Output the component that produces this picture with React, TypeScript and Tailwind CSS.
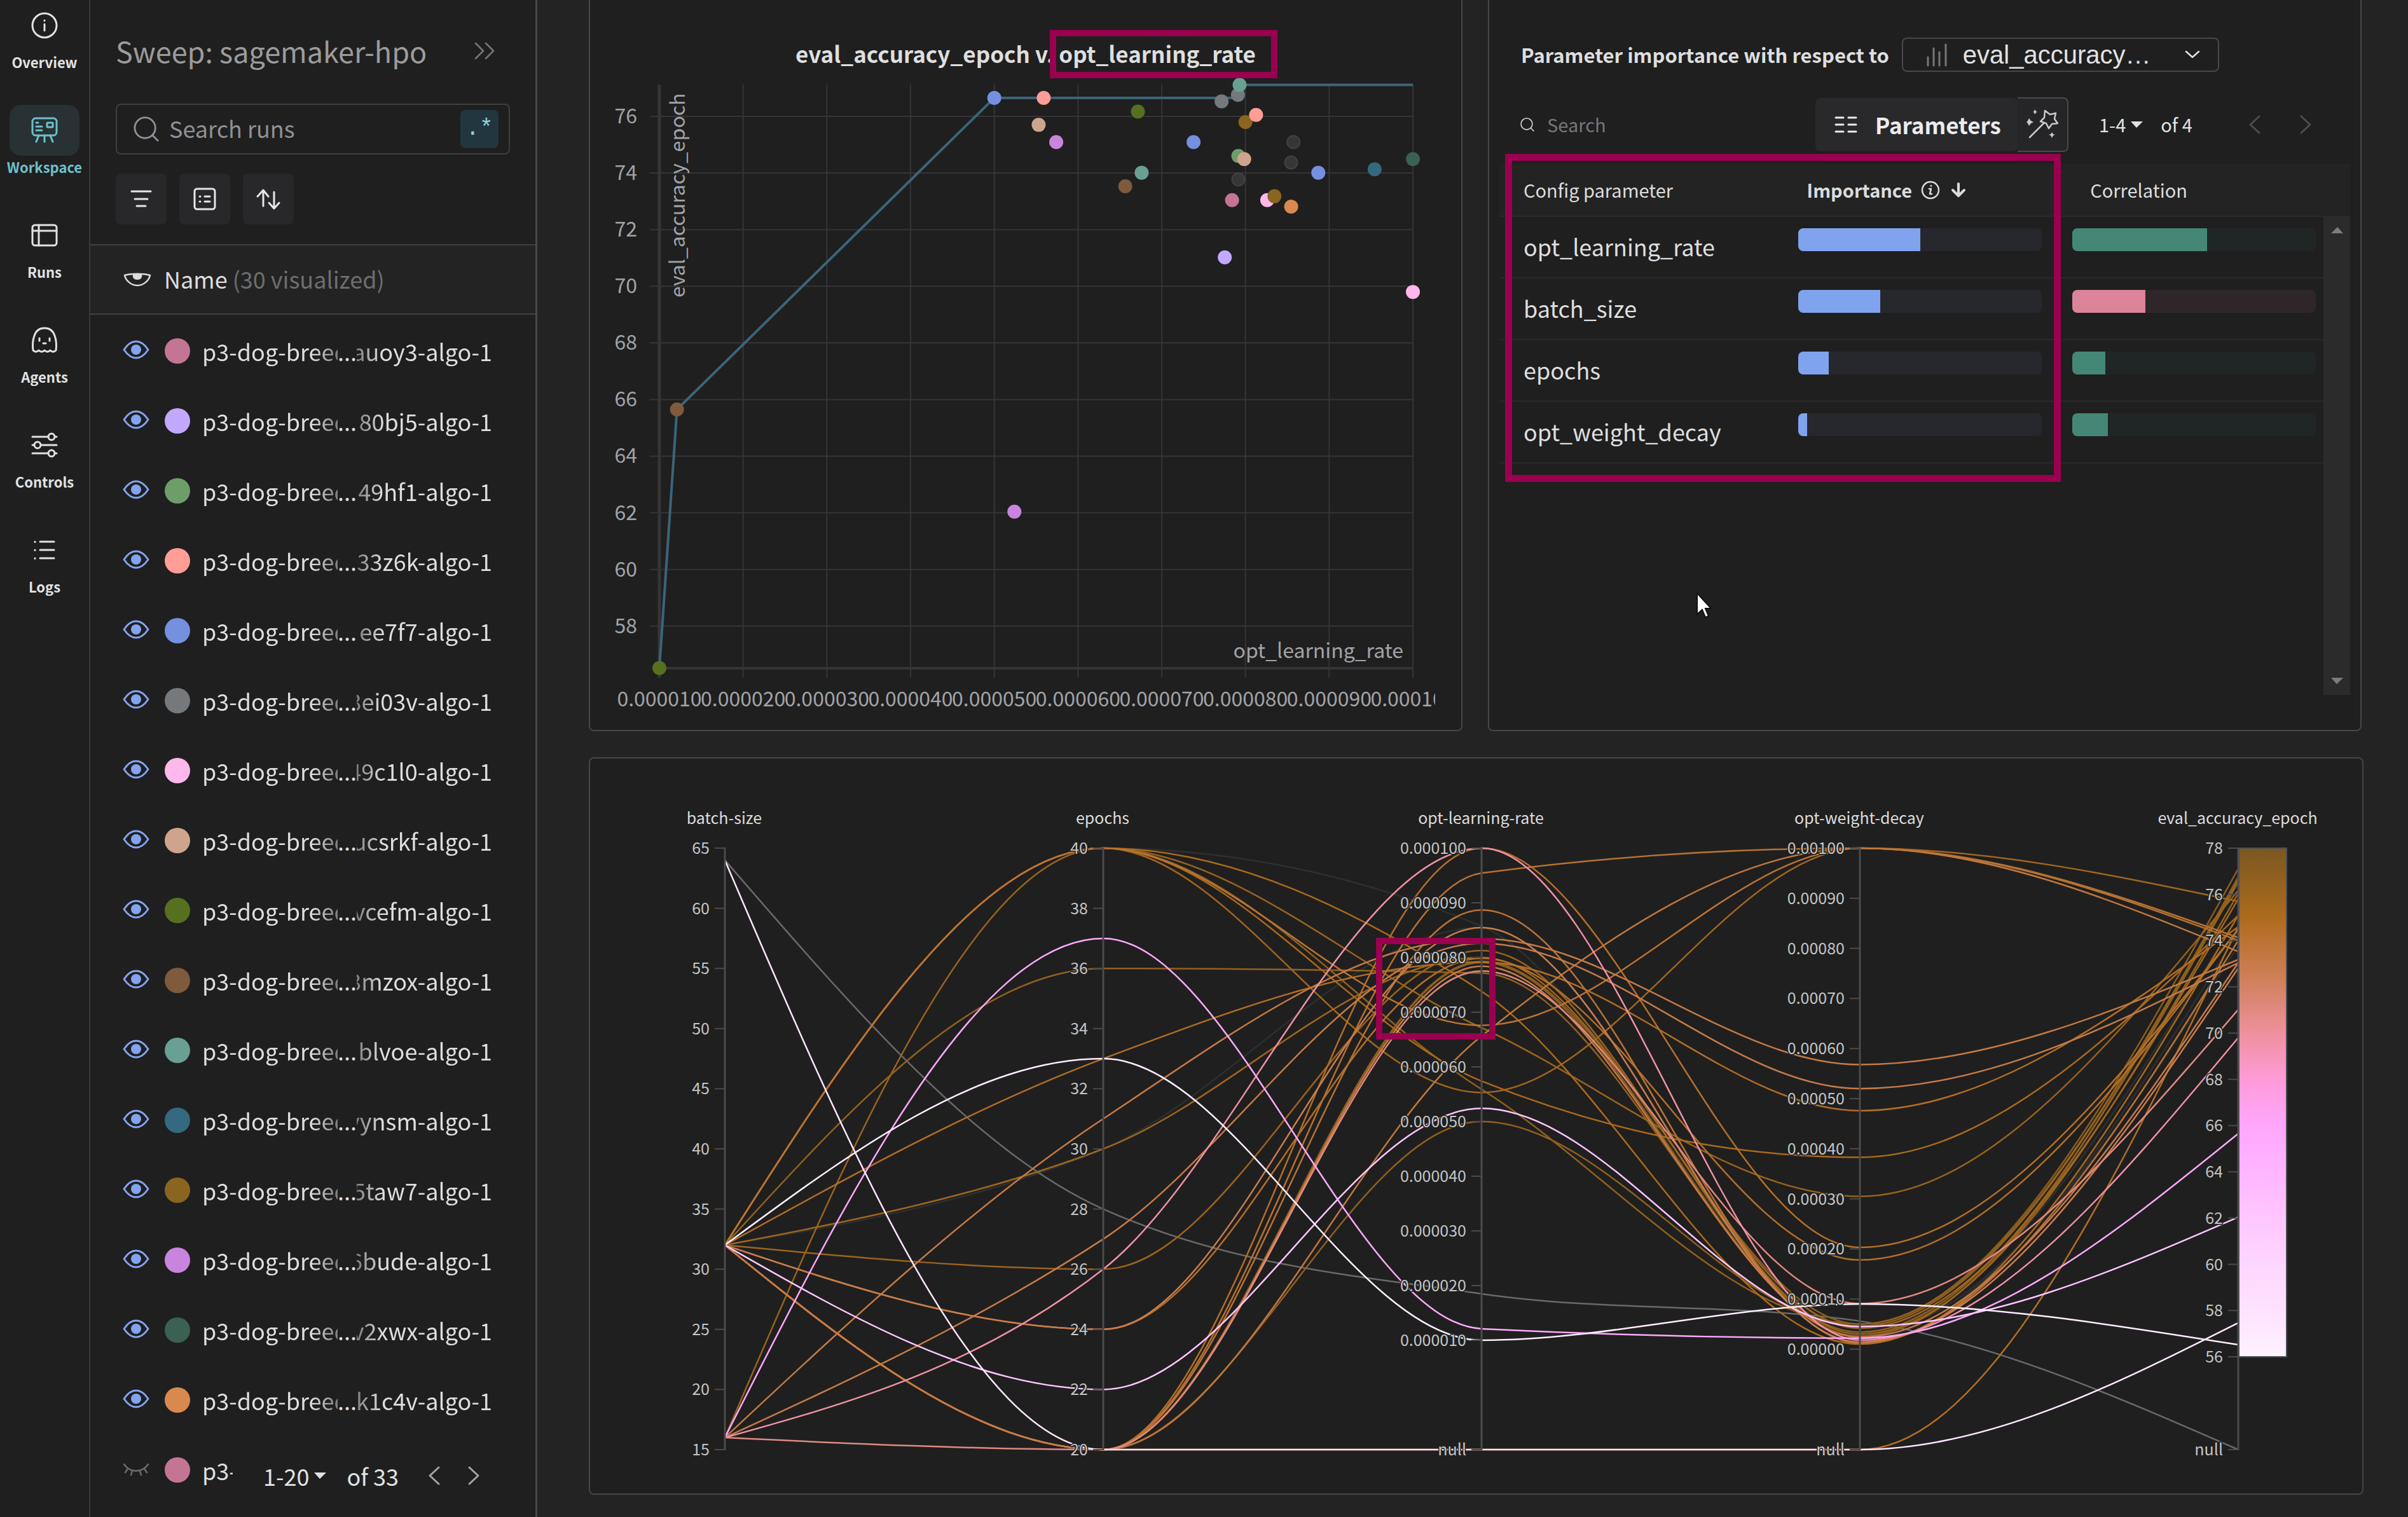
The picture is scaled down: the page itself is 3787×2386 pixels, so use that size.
import React from "react";

/* ---------- shared data ---------- */

type Run = {
  color: string;
  batch: number;
  epochs: number;
  lr: number | null; // in units of 1e-5
  wd: number | null; // in units of 1e-5
  acc: number | null;
  dim?: boolean;
};

const RUNS: Run[] = [
  { color: "#56701f", batch: 32, epochs: 33, lr: 1.0, wd: 9, acc: 56.52 },
  { color: "#7f5a3c", batch: 16, epochs: 37, lr: 1.21, wd: 2.2, acc: 65.65 },
  { color: "#7590de", batch: 32, epochs: 20, lr: 5.0, wd: 4.6, acc: 76.65 },
  { color: "#ff9d96", batch: 32, epochs: 40, lr: 5.59, wd: 5, acc: 76.65 },
  { color: "#cfa48d", batch: 32, epochs: 40, lr: 5.53, wd: 100, acc: 75.7 },
  { color: "#c985de", batch: 32, epochs: 40, lr: 5.74, wd: 38.3, acc: 75.09 },
  { color: "#56701f", batch: 16, epochs: 40, lr: 6.715, wd: 30.5, acc: 76.17 },
  { color: "#69a093", batch: 32, epochs: 40, lr: 6.76, wd: 100, acc: 74.01 },
  { color: "#7f5a3c", batch: 32, epochs: 20, lr: 6.565, wd: 100, acc: 73.53 },
  { color: "#7590de", batch: 32, epochs: 40, lr: 7.38, wd: 1, acc: 75.09 },
  { color: "#75797c", batch: 32, epochs: 36, lr: 7.715, wd: 3.4, acc: 76.53 },
  { color: "#75797c", batch: 32, epochs: 20, lr: 7.91, wd: 2.6, acc: 76.76 },
  { color: "#69a093", batch: 32, epochs: 20, lr: 7.93, wd: 5, acc: 77.11 },
  { color: "#8a651f", batch: 32, epochs: 30, lr: 8.0, wd: 4.2, acc: 75.8 },
  { color: "#ff9d96", batch: 32, epochs: 26, lr: 8.127, wd: 3, acc: 76.05 },
  { color: "#6f9d6a", batch: 32, epochs: 33, lr: 7.915, wd: 47.6, acc: 74.6 },
  { color: "#cfa48d", batch: 32, epochs: 24, lr: 7.985, wd: 17.8, acc: 74.49 },
  { color: "#363637", batch: 32, epochs: 20, lr: 7.915, wd: 3, acc: 73.77, dim: true },
  { color: "#c47594", batch: 32, epochs: 20, lr: 7.84, wd: 2.4, acc: 73.04 },
  { color: "#ffb8eb", batch: 16, epochs: 27, lr: 8.26, wd: 52, acc: 73.04 },
  { color: "#8a651f", batch: 16, epochs: 31, lr: 8.346, wd: 56.8, acc: 73.18 },
  { color: "#d9894f", batch: 32, epochs: 24, lr: 8.546, wd: 1.4, acc: 72.81 },
  { color: "#c3a8ff", batch: 16, epochs: 20, lr: 7.753, wd: 9.1, acc: 71.02 },
  { color: "#363637", batch: 32, epochs: 40, lr: 8.573, wd: 4, acc: 75.09, dim: true },
  { color: "#363637", batch: 32, epochs: 30, lr: 8.546, wd: 2, acc: 74.37, dim: true },
  { color: "#7590de", batch: 32, epochs: 20, lr: 8.87, wd: 1.2, acc: 74.01 },
  { color: "#35697f", batch: 32, epochs: 20, lr: 9.543, wd: 100, acc: 74.13 },
  { color: "#3a6152", batch: 32, epochs: 20, lr: 10, wd: 20.3, acc: 74.49 },
  { color: "#ffb8eb", batch: 16, epochs: 26, lr: 10, wd: 1.8, acc: 69.8 },
  { color: "#c985de", batch: 32, epochs: 22, lr: 5.24, wd: 4.5, acc: 62.04 },
  { color: "", batch: 32, epochs: 20, lr: null, wd: null, acc: 74.6 },
  { color: "", batch: 64, epochs: 20, lr: null, wd: null, acc: 57.47 },
  { color: "", batch: 64, epochs: 28, lr: 1.85, wd: 5.6, acc: null },
];

const RUN_LIST: [string, string][] = [
  ["#c47594", "auoy3-algo-1"],
  ["#c3a8ff", "80bj5-algo-1"],
  ["#6f9d6a", "49hf1-algo-1"],
  ["#ff9d96", "33z6k-algo-1"],
  ["#7590de", "ee7f7-algo-1"],
  ["#75797c", "3ei03v-algo-1"],
  ["#ffb8eb", "49c1l0-algo-1"],
  ["#cfa48d", "ucsrkf-algo-1"],
  ["#56701f", "vcefm-algo-1"],
  ["#7f5a3c", "3mzox-algo-1"],
  ["#69a093", "blvoe-algo-1"],
  ["#35697f", "vynsm-algo-1"],
  ["#8a651f", "5taw7-algo-1"],
  ["#c985de", "6bude-algo-1"],
  ["#3a6152", "v2xwx-algo-1"],
  ["#d9894f", "k1c4v-algo-1"],
];

/* ---------- icons ---------- */

const stroke = { fill: "none", stroke: "currentColor", strokeLinecap: "round", strokeLinejoin: "round" } as const;

function InfoIcon() {
  return (
    <svg width="44" height="44" viewBox="0 0 44 44" {...stroke} strokeWidth="3">
      <circle cx="22" cy="22" r="19" />
      <path d="M22 20v10" />
      <path d="M22 14v.5" />
    </svg>
  );
}
function BoardIcon() {
  return (
    <svg width="44" height="44" viewBox="0 0 44 44" {...stroke} strokeWidth="3">
      <rect x="3" y="3" width="38" height="27" rx="5" />
      <path d="M9 10h3M9 16h9M9 22h9M22 30v10M13 30l-4 10M31 30l4 10" />
      <rect x="26" y="10" width="9" height="7" rx="1" />
    </svg>
  );
}
function TableIcon() {
  return (
    <svg width="44" height="44" viewBox="0 0 44 44" {...stroke} strokeWidth="3">
      <rect x="3" y="6" width="38" height="32" rx="4" />
      <path d="M3 15h38M13 6v32" />
    </svg>
  );
}
function GhostIcon() {
  return (
    <svg width="44" height="44" viewBox="0 0 44 44" {...stroke} strokeWidth="3">
      <path d="M4 38c-1-8-1-15 2-23C9 6 15 3 22 3s13 3 16 12c3 8 3 15 2 23-3 3-6 3-9 0-3 3-6 3-9 0-3 3-6 3-9 0-3 3-6 3-9 0z" />
      <path d="M14 19v4M30 19v4M20 27h4" />
    </svg>
  );
}
function SlidersIcon() {
  return (
    <svg width="44" height="44" viewBox="0 0 44 44" {...stroke} strokeWidth="3">
      <path d="M3 9h25M38 9h3M3 22h3M16 22h25M3 35h25M38 35h3" />
      <circle cx="33" cy="9" r="5" />
      <circle cx="11" cy="22" r="5" />
      <circle cx="33" cy="35" r="5" />
    </svg>
  );
}
function LogsIcon() {
  return (
    <svg width="44" height="44" viewBox="0 0 44 44" {...stroke} strokeWidth="3">
      <path d="M15 9h22M15 22h22M15 35h22M7 9v.5M7 22v.5M7 35v.5" />
    </svg>
  );
}
function EyeIcon() {
  return (
    <svg width="42" height="30" viewBox="0 0 42 30" {...stroke} strokeWidth="3">
      <path d="M2 15C8 6 14 2 21 2s13 4 19 13c-6 9-12 13-19 13S8 24 2 15z" />
      <circle cx="21" cy="15" r="8" fill="currentColor" stroke="none" />
    </svg>
  );
}
function HalfEyeIcon() {
  return (
    <svg width="44" height="22" viewBox="0 0 44 22" {...stroke} strokeWidth="2.5">
      <path d="M2 4c10-3 30-3 40 0-2 9-11 16-20 16S4 13 2 4z" />
      <path d="M15 3h14c1 5-2 8-7 8s-8-3-7-8z" fill="currentColor" stroke="none" />
    </svg>
  );
}
function ClosedEyeIcon() {
  return (
    <svg width="42" height="26" viewBox="0 0 42 26" {...stroke} strokeWidth="2.5">
      <path d="M2 4c10 14 28 14 38 0M8 11l-4 6M15 14l-2 7M27 14l2 7M34 11l4 6" />
    </svg>
  );
}
function SearchIcon({ size }: { size: number }) {
  return (
    <svg width={size} height={size} viewBox="0 0 42 42" {...stroke} strokeWidth="3" className="shrink-0">
      <circle cx="19" cy="19" r="17" />
      <path d="M31 31l9 9" />
    </svg>
  );
}
function Chevron({ dir, className }: { dir: "left" | "right"; className?: string }) {
  return (
    <svg width="20" height="32" viewBox="0 0 20 32" {...stroke} strokeWidth="3" className={className}>
      <path d={dir === "left" ? "M17 3L3 16l14 13" : "M3 3l14 13L3 29"} />
    </svg>
  );
}
function Caret() {
  return (
    <svg width="19" height="10" viewBox="0 0 19 10">
      <path d="M0 0h19L9 10z" fill="currentColor" />
    </svg>
  );
}
function WandIcon() {
  return (
    <svg width="50" height="50" viewBox="0 0 50 50" {...stroke} strokeWidth="2.5">
      <path d="M5 45L28 22" />
      <path d="M29 3l8 6 9-2-2 9 5 7-9 1-5 7-4-8-9-3 6-6z" />
      <path d="M4 15l3 4 4 2-4 2-3 4-2-4-2-2 2-2zM13 1l2 3 2 1-2 1-2 3-1-3-2-1 2-1zM40 37l2 3 3 1-3 1-2 4-2-4-3-1 3-1z" fill="currentColor" stroke="none" />
    </svg>
  );
}

/* ---------- left navigation ---------- */

const NAV = [
  { label: "Overview", icon: InfoIcon },
  { label: "Workspace", icon: BoardIcon, active: true },
  { label: "Runs", icon: TableIcon },
  { label: "Agents", icon: GhostIcon },
  { label: "Controls", icon: SlidersIcon },
  { label: "Logs", icon: LogsIcon },
];

function NavRail() {
  return (
    <nav className="flex w-[142px] shrink-0 flex-col gap-[51px] border-r-2 border-[#38383a]">
      {NAV.map(({ label, icon: Icon, active }) => (
        <a
          key={label}
          href={"#" + label.toLowerCase()}
          className={"flex flex-col items-center " + (active ? "text-[#6fc0ca]" : "text-[#e2e2e3]")}
        >
          <span
            className={
              "flex h-20 w-[110px] items-center justify-center rounded-[18px] " + (active ? "bg-[#283133]" : "")
            }
          >
            <Icon />
          </span>
          <span className="text-[22px] leading-[34px] font-bold">{label}</span>
        </a>
      ))}
    </nav>
  );
}

/* ---------- run list ---------- */

function Sidebar() {
  return (
    <aside className="relative flex w-[703px] shrink-0 flex-col overflow-hidden border-r-3 border-[#48484a]">
      <div className="flex h-[384px] shrink-0 flex-col pt-[50px] pr-10 pl-10">
        <div className="flex items-center justify-between pr-[24px]">
          <h1 className="text-[45px] leading-[60px] text-[#9b9b9c]">Sweep: sagemaker-hpo</h1>
          <button aria-label="Expand" className="text-[#77777a]">
            <svg width="32" height="28" viewBox="0 0 32 28" {...stroke} strokeWidth="2.5">
              <path d="M2 2l12 12L2 26M18 2l12 12-12 12" />
            </svg>
          </button>
        </div>
        <div className="mt-[53px] flex h-20 items-center rounded-lg border-2 border-[#3e3f42] pr-[16px] pl-[26px] text-[#8f9096]">
          <SearchIcon size={40} />
          <input
            aria-label="Search runs"
            placeholder="Search runs"
            className="ml-4 min-w-0 flex-1 bg-transparent pb-1 text-[36px] outline-none placeholder:text-[#8f9096]"
          />
          <button
            aria-label="Use regular expression"
            className="h-[60px] w-[60px] rounded-lg bg-[#22363f] font-['Liberation_Mono',monospace] text-[36px] leading-[60px] text-[#8ed3df]"
          >
            .*
          </button>
        </div>
        <div className="mt-[30px] flex gap-5 text-[#e6e6e7]">
          <button aria-label="Filter" className="flex h-20 w-20 items-center justify-center rounded-lg bg-[#28282a]">
            <svg width="36" height="36" viewBox="0 0 36 36" {...stroke} strokeWidth="3">
              <path d="M3 6h30M8 18h20M11 29h14" />
            </svg>
          </button>
          <button aria-label="Group" className="flex h-20 w-20 items-center justify-center rounded-lg bg-[#28282a]">
            <svg width="36" height="36" viewBox="0 0 36 36" {...stroke} strokeWidth="3">
              <rect x="2" y="2" width="32" height="32" rx="4" />
              <path d="M10 14h1M18 14h8M10 22h1M18 22h8" />
            </svg>
          </button>
          <button aria-label="Sort" className="flex h-20 w-20 items-center justify-center rounded-lg bg-[#28282a]">
            <svg width="38" height="34" viewBox="0 0 38 34" {...stroke} strokeWidth="3">
              <path d="M11 28V4M2 13l9-10 8 10M28 6v25M20 23l8 9 8-9" />
            </svg>
          </button>
        </div>
      </div>
      <div className="flex h-[111px] shrink-0 items-center gap-5 border-y-2 border-[#414143] bg-[#232323] pl-[52px] text-[36px] text-[#dcdcdd]">
        <HalfEyeIcon />
        <h2 className="pb-1">
          Name <span className="text-[#6e6e6f]">(30 visualized)</span>
        </h2>
      </div>
      <ul className="pt-0.5">
        {RUN_LIST.map(([color, tail]) => (
          <li key={tail} className="flex h-[110px] items-center pl-[51px] text-[36px] leading-[52px] text-[#dededf]">
            <button aria-label={"Hide run " + tail} className="pb-1 text-[#83a4f0]">
              <EyeIcon />
            </button>
            <span className="ml-6 size-10 rounded-full" style={{ backgroundColor: color }} />
            <a href={"#" + tail} className="ml-[19px] flex">
              <span className="w-[213px] overflow-hidden whitespace-nowrap [mask-image:linear-gradient(to_left,rgba(0,0,0,0.5),black_40px)]">
                p3-dog-breed
              </span>
              <span>...</span>
              <span className="flex w-[213px] justify-end overflow-hidden whitespace-nowrap [mask-image:linear-gradient(to_right,rgba(0,0,0,0.5),black_40px)]">
                {tail}
              </span>
            </a>
          </li>
        ))}
        <li className="flex h-[110px] items-center pl-[51px] text-[36px] leading-[52px] text-[#dededf]">
          <button aria-label="Show run" className="text-[#6b6b6d]">
            <ClosedEyeIcon />
          </button>
          <span className="ml-6 size-10 rounded-full bg-[#c47594]" />
          <a href="#p3" className="ml-[19px] w-12 overflow-hidden whitespace-nowrap">
            p3-
          </a>
        </li>
      </ul>
      <div className="absolute right-0 bottom-0 flex h-[130px] w-[476px] items-center bg-[#1f1f1f] pl-12 text-[36px] text-[#e2e2e3]">
        <button className="flex items-center gap-2">
          1-20 <Caret />
        </button>
        <span className="ml-8">of 33</span>
        <button aria-label="Previous page" className="ml-[46px] text-[#a5a5a6]">
          <Chevron dir="left" />
        </button>
        <button aria-label="Next page" className="ml-[42px] text-[#a5a5a6]">
          <Chevron dir="right" />
        </button>
      </div>
    </aside>
  );
}

/* ---------- scatter plot ---------- */

const sx = (lr: number) => 1037 + (lr - 1) * 131.67;
const sy = (acc: number) => 183 + (76 - acc) * 44.54;

function ScatterPanel() {
  const xs = Array.from({ length: 10 }, (_, i) => i + 1);
  const ys = Array.from({ length: 10 }, (_, i) => 58 + i * 2);
  const frontier: [number, number][] = [
    [1, 56.52],
    [1.21, 65.65],
    [5, 76.65],
    [7.84, 76.65],
    [7.93, 77.11],
    [10, 77.11],
  ];
  return (
    <section className="rounded-b-lg border-2 border-t-0 border-[#464648] bg-[#1f1f1f] pt-[60px]">
      <h2 className="pb-0.5 text-center text-[35px] leading-12 font-bold text-[#dededf]">
        <span>eval_accuracy_epoch v. </span>
        <span className="relative">
          opt_learning_rate
          <span className="absolute -top-[11px] -left-[14px] h-[76px] w-[358px] border-10 border-[#9a004f]" />
        </span>
      </h2>
      <svg viewBox="928 110 1370 1038" className="block w-full" fontSize="32" fill="#a2a3a8">
        <defs>
          <clipPath id="ticks">
            <rect x="928" y="1070" width="1329" height="70" />
          </clipPath>
        </defs>
        <g stroke="#353538" strokeWidth="2">
          {xs.map((v) => (
            <line key={v} x1={sx(v)} x2={sx(v)} y1="133" y2="1066" strokeWidth={v === 1 ? 5 : 2} />
          ))}
          {ys.map((v) => (
            <line key={v} x1="1022" x2="2222" y1={sy(v)} y2={sy(v)} />
          ))}
          <line x1="1037" x2="2222" y1="1051" y2="1051" strokeWidth="4" />
        </g>
        {ys.map((v) => (
          <text key={v} x="1002" y={sy(v) + 11} textAnchor="end">
            {v}
          </text>
        ))}
        <g clipPath="url(#ticks)">
          {xs.map((v) => (
            <text key={v} x={sx(v)} y="1111" textAnchor="middle">
              {(v / 1e5).toFixed(6)}
            </text>
          ))}
        </g>
        <text transform="translate(1077 468) rotate(-90)">eval_accuracy_epoch</text>
        <text x="2207" y="1035" textAnchor="end">
          opt_learning_rate
        </text>
        <polyline
          points={frontier.map(([a, b]) => sx(a) + "," + sy(b)).join(" ")}
          fill="none"
          stroke="#3b6479"
          strokeWidth="4"
        />
        {RUNS.filter((r) => r.color && r.lr !== null && r.acc !== null).map((r, i) => (
          <circle
            key={i}
            cx={sx(r.lr as number)}
            cy={sy(r.acc as number)}
            r={r.dim ? 10 : 11}
            fill={r.color}
            stroke={r.dim ? "#424243" : "none"}
            strokeWidth="2"
          />
        ))}
      </svg>
    </section>
  );
}

/* ---------- parameter importance ---------- */

const PARAMS = [
  { name: "opt_learning_rate", importance: 50.2, correlation: 55.3, positive: true },
  { name: "batch_size", importance: 33.8, correlation: 30.1, positive: false },
  { name: "epochs", importance: 12.6, correlation: 13.4, positive: true },
  { name: "opt_weight_decay", importance: 3.7, correlation: 14.5, positive: true },
];

function Bar({ value, track, fill }: { value: number; track: string; fill: string }) {
  return (
    <div className={"h-9 overflow-hidden rounded-lg " + track}>
      <div className={"h-full " + fill} style={{ width: value + "%" }} />
    </div>
  );
}

function ImportancePanel() {
  return (
    <section className="relative mr-[3px] flex flex-col rounded-b-lg border-2 border-t-0 border-[#464648] bg-[#1f1f1f] pr-4 pb-[55px] pl-4">
      <div className="mt-[59px] flex h-[54px] items-center pl-[34px]">
        <label htmlFor="metric" className="text-[31px] font-bold whitespace-nowrap text-[#dededf]">
          Parameter importance with respect to
        </label>
        <div className="ml-[20px] flex h-[54px] w-[499px] items-center rounded-lg border-2 border-[#48484a] pr-7 pl-9">
          <svg width="34" height="38" viewBox="0 0 34 38" {...stroke} strokeWidth="3" className="shrink-0 text-[#77777a]">
            <path d="M3 23v13M12 9v27M21 15v21M31 3v33" />
          </svg>
          <select
            id="metric"
            className="ml-6 min-w-0 flex-1 appearance-none bg-transparent font-['Liberation_Sans',sans-serif] text-[40px] leading-[48px] text-[#e2e2e3]"
          >
            <option>eval_accuracy…</option>
          </select>
          <svg width="24" height="14" viewBox="0 0 24 14" {...stroke} strokeWidth="2.5" className="text-[#e2e2e3]">
            <path d="M2 2l10 9 10-9" />
          </svg>
        </div>
      </div>
      <div className="mt-[40px] flex h-[86px] items-center pl-[33px]">
        <span className="text-[#dededf]">
          <SearchIcon size={22} />
        </span>
        <input
          aria-label="Search"
          placeholder="Search"
          className="ml-5 w-[400px] bg-transparent text-[29px] outline-none placeholder:text-[#76767c]"
        />
        <button className="ml-[22px] flex h-[84px] w-[318px] items-center rounded-lg bg-[#29292b] pl-[30px] text-[35px] font-bold text-[#ececed]">
          <svg width="36" height="28" viewBox="0 0 36 28" {...stroke} strokeWidth="3">
            <path d="M2 3h12M22 3h12M2 14h12M22 14h12M2 25h12M22 25h12" />
          </svg>
          <span className="ml-[28px]">Parameters</span>
        </button>
        <button
          aria-label="Auto-select parameters"
          className="flex h-[86px] w-[80px] items-center justify-center rounded-r-lg border-2 border-l-0 border-[#4a4a4c] bg-[#252527] text-[#c9c9ca]"
        >
          <WandIcon />
        </button>
        <button className="ml-[48px] flex items-center gap-2 text-[29px] text-[#e2e2e3]">
          1-4 <Caret />
        </button>
        <span className="ml-[28px] text-[29px] text-[#e2e2e3]">of 4</span>
        <button aria-label="Previous" className="ml-[88px] text-[#4d4d4f]">
          <Chevron dir="left" />
        </button>
        <button aria-label="Next" className="ml-[60px] text-[#4d4d4f]">
          <Chevron dir="right" />
        </button>
      </div>
      <div className="mt-[19px] flex flex-1">
        <table className="h-fit flex-1 table-fixed border-collapse text-left">
          <thead>
            <tr className="h-[82px] border-b-2 border-[#2a2a2a] bg-[#232323] text-[29px] text-[#dcdcdd]">
              <th className="w-[35%] pl-[38px] font-normal">Config parameter</th>
              <th className="w-[33%] pl-[30px] font-bold">
                <span className="flex items-center">
                  Importance
                  <svg width="30" height="30" viewBox="0 0 30 30" {...stroke} strokeWidth="2.5" className="ml-3.5">
                    <circle cx="15" cy="15" r="13" />
                    <path d="M13 13h3l-2 8h3M16 8v.5" />
                  </svg>
                  <svg width="26" height="26" viewBox="0 0 26 26" {...stroke} strokeWidth="4" className="ml-4">
                    <path d="M13 3v19M4 13l9 9 9-9" />
                  </svg>
                </span>
              </th>
              <th className="pl-12 font-normal">Correlation</th>
            </tr>
          </thead>
          <tbody>
            {PARAMS.map((p) => (
              <tr key={p.name} className="h-[97px] border-b-2 border-[#292929]">
                <td className="pb-1 pl-[38px] text-[36px] leading-[52px] text-[#dededf]">{p.name}</td>
                <td className="pt-[18px] pr-7 pl-4 align-top">
                  <Bar value={p.importance} track="bg-[#27282d]" fill="bg-[#80a3ee]" />
                </td>
                <td className="pt-[18px] pr-3 pl-5 align-top">
                  {p.positive ? (
                    <Bar value={p.correlation} track="bg-[#202626]" fill="bg-[#448776]" />
                  ) : (
                    <Bar value={p.correlation} track="bg-[#2e2628]" fill="bg-[#dc8499]" />
                  )}
                </td>
              </tr>
            ))}
          </tbody>
        </table>
        <div className="flex w-[42px] flex-col">
          <div className="h-[82px] bg-[#232323]" />
          <div className="flex flex-1 flex-col items-center justify-between bg-[#2b2b2b] py-[17px] text-[#7d7d7e]">
            <span className="rotate-180">
              <Caret />
            </span>
            <Caret />
          </div>
        </div>
      </div>
      <div className="pointer-events-none absolute top-[242px] left-[25px] h-[516px] w-[874px] border-11 border-[#9a004f]" />
      <svg width="26" height="44" viewBox="0 0 26 44" className="absolute top-[930px] left-[324px]">
        <path d="M3 3v33l8-7 5 12 5-2-5-12h9z" fill="#fff" stroke="#111" strokeWidth="2" />
      </svg>
    </section>
  );
}

/* ---------- parallel coordinates ---------- */

const TOP = 1334;
const BOTTOM = 2280;
const AXES = [
  { label: "batch-size", x: 1140 },
  { label: "epochs", x: 1735 },
  { label: "opt-learning-rate", x: 2330 },
  { label: "opt-weight-decay", x: 2925 },
  { label: "eval_accuracy_epoch", x: 3520 },
];
const linear = (v: number, lo: number, hi: number, yLo: number) => yLo + ((v - lo) / (hi - lo)) * (TOP - yLo);
const yBatch = (v: number) => linear(v, 15, 65, BOTTOM);
const yEpochs = (v: number) => linear(v, 20, 40, BOTTOM);
const yLr = (v: number | null) => (v === null ? BOTTOM : linear(v, 1, 10, 2108));
const yWd = (v: number | null) => (v === null ? BOTTOM : linear(v, 0, 100, 2122));
const yAcc = (v: number | null) => (v === null ? BOTTOM : linear(v, 56, 78, 2134));

const TICKS: { y: number; text: string }[][] = [
  Array.from({ length: 11 }, (_, i) => ({ y: yBatch(15 + i * 5), text: String(15 + i * 5) })),
  Array.from({ length: 11 }, (_, i) => ({ y: yEpochs(20 + i * 2), text: String(20 + i * 2) })),
  [{ y: BOTTOM, text: "null" }].concat(
    Array.from({ length: 10 }, (_, i) => ({ y: yLr(i + 1), text: ((i + 1) / 1e5).toFixed(6) })),
  ),
  [{ y: BOTTOM, text: "null" }].concat(
    Array.from({ length: 11 }, (_, i) => ({ y: yWd(i * 10), text: (i / 1e4).toFixed(5) })),
  ),
  [{ y: BOTTOM, text: "null" }].concat(
    Array.from({ length: 12 }, (_, i) => ({ y: yAcc(56 + i * 2), text: String(56 + i * 2) })),
  ),
];

const STOPS: [number, [number, number, number]][] = [
  [56, [253, 242, 255]],
  [58, [254, 226, 255]],
  [60, [253, 214, 255]],
  [62, [255, 198, 255]],
  [64, [255, 181, 255]],
  [66, [255, 166, 252]],
  [68, [255, 155, 216]],
  [70, [239, 144, 158]],
  [72.5, [205, 127, 85]],
  [75, [173, 107, 28]],
  [78, [122, 87, 34]],
];
function accColor(v: number) {
  for (let i = 1; i < STOPS.length; i++) {
    const [b, cb] = STOPS[i];
    const [a, ca] = STOPS[i - 1];
    if (v <= b) {
      const t = (v - a) / (b - a);
      return `rgb(${ca.map((c, k) => Math.round(c + (cb[k] - c) * t)).join(",")})`;
    }
  }
  return "rgb(122,87,34)";
}

/* Monotone cubic interpolation through points with increasing x. */
function monotonePath(p: [number, number][]) {
  const n = p.length;
  const h = (i: number) => p[i + 1][0] - p[i][0];
  const s = (i: number) => (p[i + 1][1] - p[i][1]) / h(i);
  const m: number[] = new Array(n).fill(0);
  for (let i = 1; i < n - 1; i++) {
    const s0 = s(i - 1);
    const s1 = s(i);
    const mid = (s0 * h(i) + s1 * h(i - 1)) / (h(i - 1) + h(i));
    m[i] = (Math.sign(s0) + Math.sign(s1)) * Math.min(Math.abs(s0), Math.abs(s1), 0.5 * Math.abs(mid));
  }
  m[0] = (3 * s(0) - m[1]) / 2;
  m[n - 1] = (3 * s(n - 2) - m[n - 2]) / 2;
  let d = `M${p[0][0]} ${p[0][1]}`;
  for (let i = 0; i < n - 1; i++) {
    const dx = h(i) / 3;
    d += `C${p[i][0] + dx} ${p[i][1] + dx * m[i]} ${p[i + 1][0] - dx} ${p[i + 1][1] - dx * m[i + 1]} ${p[i + 1][0]} ${p[i + 1][1]}`;
  }
  return d;
}

const LINES = RUNS.map((r) => ({
  order: r.dim ? 1000 : r.acc === null ? 500 : r.acc,
  color: r.dim ? "#2e3030" : r.acc === null ? "#69696a" : accColor(r.acc),
  d: monotonePath([
    [AXES[0].x, yBatch(r.batch)],
    [AXES[1].x, yEpochs(r.epochs)],
    [AXES[2].x, yLr(r.lr)],
    [AXES[3].x, yWd(r.wd)],
    [AXES[4].x, yAcc(r.acc)],
  ]),
})).sort((a, b) => b.order - a.order);

function ParallelPanel() {
  return (
    <section className="col-span-2 rounded-lg border-2 border-[#464648] bg-[#1f1f1f]">
      <svg viewBox="928 1193 2787 1156" className="block w-full" fontSize="25" fill="#c4c4c5">
        <defs>
          <linearGradient id="scale" x1="0" x2="0" y1="1" y2="0">
            {STOPS.map(([v]) => (
              <stop key={v} offset={(v - 56) / 22} stopColor={accColor(v)} />
            ))}
          </linearGradient>
        </defs>
        {AXES.map((a) => (
          <text key={a.label} x={a.x - 1} y="1296" textAnchor="middle" fill="#dcdcdd">
            {a.label}
          </text>
        ))}
        <g fill="none" strokeWidth="2.5">
          {LINES.map((l, i) => (
            <path key={i} d={l.d} stroke={l.color} />
          ))}
        </g>
        {AXES.map((a, i) => (
          <g key={a.label}>
            <line x1={a.x} x2={a.x} y1={TOP - 1} y2={BOTTOM + 1} stroke="#4b4b4c" strokeWidth="3" />
            {TICKS[i].map((t) => (
              <g key={t.text}>
                <line x1={a.x - 16} x2={a.x} y1={t.y} y2={t.y} stroke="#4b4b4c" strokeWidth="2" />
                <text
                  x={a.x - 24}
                  y={t.y + 9}
                  textAnchor="end"
                  stroke="#1f1f1f"
                  strokeWidth="3"
                  strokeLinejoin="round"
                  paintOrder="stroke"
                >
                  {t.text}
                </text>
              </g>
            ))}
          </g>
        ))}
        <rect x="3521" y={TOP} width="75" height="800" fill="url(#scale)" stroke="#504e55" strokeWidth="2" />
        <rect x="2169" y="1480" width="178" height="150" fill="none" stroke="#9a004f" strokeWidth="10" />
      </svg>
    </section>
  );
}

export default function App() {
  return (
    <div className="flex h-screen overflow-hidden bg-[#1f1f1f] font-['Noto_Sans_CJK_SC',sans-serif]">
      <NavRail />
      <Sidebar />
      <main className="grid min-w-0 flex-1 auto-rows-max grid-cols-[1374fr_1377fr] content-start gap-x-10 gap-y-[41px] bg-[#232323] pr-[70px] pl-[81px]">
        <ScatterPanel />
        <ImportancePanel />
        <ParallelPanel />
      </main>
    </div>
  );
}
